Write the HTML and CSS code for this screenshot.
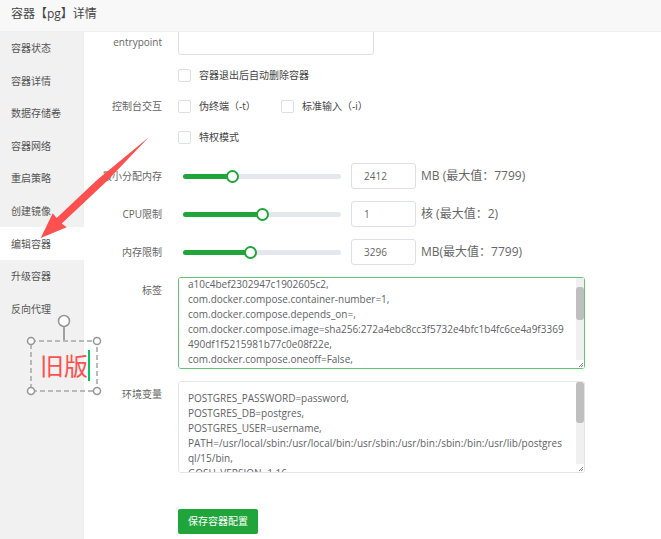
FILE: index.html
```
<!DOCTYPE html>
<html lang="zh-CN">
<head>
<meta charset="utf-8">
<title>容器【pg】详情</title>
<link rel="stylesheet" href="styles.css">
</head>
<body>
<header class="title-bar"><h1>容器【pg】详情</h1></header>
<div class="layout">
  <nav class="sidebar">
    <ul class="menu">
      <li><a href="#">容器状态</a></li>
      <li><a href="#">容器详情</a></li>
      <li><a href="#">数据存储卷</a></li>
      <li><a href="#">容器网络</a></li>
      <li><a href="#">重启策略</a></li>
      <li><a href="#">创建镜像</a></li>
      <li><a href="#" class="active">编辑容器</a></li>
      <li><a href="#">升级容器</a></li>
      <li><a href="#">反向代理</a></li>
    </ul>
  </nav>
  <main class="content">
    <form class="form">
      <div class="row">
        <label class="label" for="entry">entrypoint</label>
        <input class="text entry" id="entry" type="text">
      </div>
      <div class="checks">
        <div class="row">
          <span class="label"></span>
          <label class="check"><input type="checkbox">容器退出后自动删除容器</label>
        </div>
        <div class="row">
          <span class="label">控制台交互</span>
          <label class="check half"><input type="checkbox">伪终端（-t）</label>
          <label class="check"><input type="checkbox">标准输入（-i）</label>
        </div>
        <div class="row">
          <span class="label"></span>
          <label class="check"><input type="checkbox">特权模式</label>
        </div>
      </div>
      <div class="limits">
        <div class="row">
          <label class="label" for="min">最小分配内存</label>
          <input class="slider" id="min" type="range" max="7799" value="2300" style="--fill:31%">
          <input class="text num" type="text" value="2412" aria-label="最小分配内存">
          <span class="unit">MB (最大值：7799)</span>
        </div>
        <div class="row">
          <label class="label" for="cpu">CPU限制</label>
          <input class="slider" id="cpu" type="range" max="2" value="1" style="--fill:50%">
          <input class="text num" type="text" value="1" aria-label="CPU限制">
          <span class="unit">核 (最大值：2)</span>
        </div>
        <div class="row">
          <label class="label" for="mem">内存限制</label>
          <input class="slider" id="mem" type="range" max="7799" value="3296" style="--fill:42%">
          <input class="text num" type="text" value="3296" aria-label="内存限制">
          <span class="unit">MB(最大值：7799)</span>
        </div>
      </div>
      <div class="areas">
        <div class="row top">
          <label class="label" for="tags">标签</label>
          <div class="area-box">
            <textarea class="area focused" id="tags" spellcheck="false">

a10c4bef2302947c1902605c2,
com.docker.compose.container-number=1,
com.docker.compose.depends_on=,
com.docker.compose.image=sha256:272a4ebc8cc3f5732e4bfc1b4fc6ce4a9f3369490df1f5215981b77c0e08f22e,
com.docker.compose.oneoff=False,






</textarea>
            <div class="bar"><div class="thumb scrolled"></div><svg class="grip" width="8" height="8" viewBox="0 0 8 8" aria-hidden="true"><path d="M3 7L7 3M5 7L7 5" stroke="#888"/></svg></div>
          </div>
        </div>
        <div class="row top">
          <label class="label" for="env">环境变量</label>
          <div class="area-box">
            <textarea class="area" id="env" spellcheck="false">POSTGRES_PASSWORD=password,
POSTGRES_DB=postgres,
POSTGRES_USER=username,
PATH=/usr/local/sbin:/usr/local/bin:/usr/sbin:/usr/bin:/sbin:/bin:/usr/lib/postgresql/15/bin,
GOSU_VERSION=1.16



</textarea>
            <div class="bar"><div class="thumb"></div><svg class="grip" width="8" height="8" viewBox="0 0 8 8" aria-hidden="true"><path d="M3 7L7 3M5 7L7 5" stroke="#888"/></svg></div>
          </div>
        </div>
      </div>
      <div class="row actions">
        <span class="label"></span>
        <button class="save" type="button">保存容器配置</button>
      </div>
    </form>
  </main>
</div>
<svg class="arrow" width="112" height="106" viewBox="0 0 112 106" aria-hidden="true">
  <path d="M111 4 L59 47 L18.700 85 L14.700 80.300 L2.700 105 L28.700 94.300 L23.700 90.500 L69 48 Z" fill="#ff5050"/>
</svg>
<div class="note">
  <svg class="note-frame" width="80" height="84" viewBox="0 0 80 84" aria-hidden="true">
    <g fill="none" stroke="#b9b9b9" stroke-width="2">
      <path d="M40 11V27" stroke="#a0a0a0"/>
      <rect x="7" y="27" width="66" height="50" stroke-dasharray="5 3"/>
    </g>
    <g fill="#fff" stroke="#969696" stroke-width="1.500">
      <circle cx="40" cy="7" r="5.500"/>
      <circle cx="7" cy="27" r="3.500"/><circle cx="73" cy="27" r="3.500"/>
      <circle cx="7" cy="77" r="3.500"/><circle cx="73" cy="77" r="3.500"/>
    </g>
  </svg>
  <span class="note-text">旧版</span>
</div>
<script src="main.js"></script>
</body>
</html>
```
FILE: styles.css
```
* { box-sizing: border-box; }
body {
  margin: 0;
  height: 100vh;
  display: flex;
  flex-direction: column;
  overflow: hidden;
  background: #fff;
  color: #555;
  font: 10px/16px "Open Sans", "Noto Sans CJK SC", sans-serif;
}
input, textarea, button { font: inherit; color: inherit; margin: 0; }
.title-bar {
  flex: none;
  padding: 4px 11px 7px;
  background: #f8f8f8;
  border-bottom: 1px solid #eee;
}
h1 { margin: 0; font-size: 12px; line-height: 20px; font-weight: 400; color: #444; }
.layout { flex: 1; min-height: 0; display: flex; }
.sidebar { flex: none; width: 84px; background: #f1f1f1; }
.menu {
  height: 293px;
  margin: 0;
  padding: 0;
  list-style: none;
  display: grid;
  grid-template-rows: repeat(9, 1fr);
}
.menu a {
  display: flex;
  align-items: center;
  height: 100%;
  padding-left: 11px;
  color: #555;
  text-decoration: none;
}
.menu .active { background: #fff; }
.content { flex: 1; min-width: 0; overflow: hidden; }
.form { margin-top: -3px; }
.row { display: flex; align-items: center; min-height: 26px; }
.row.top { align-items: flex-start; }
.label {
  flex: none;
  width: 78px;
  margin-right: 16px;
  text-align: right;
  white-space: nowrap;
  color: #666;
}
.top .label { line-height: 26px; }
.text {
  height: 26px;
  border: 1px solid #dcdfe6;
  border-radius: 3px;
  padding: 0 12px;
  background: #fff;
  color: #666;
  outline: 0;
}
.entry { width: 196px; }
.checks { padding: 7px 0 13px; display: grid; gap: 5px; }
.check { display: flex; align-items: center; gap: 8px; color: #444; }
.half { width: 103px; }
.check input {
  appearance: none;
  width: 13px;
  height: 13px;
  border: 1px solid #dcdfe6;
  border-radius: 2px;
  background: #fff;
}
.limits { display: grid; gap: 12px; padding-bottom: 12px; }
.slider {
  appearance: none;
  flex: none;
  width: 158px;
  height: 14px;
  margin: 0 10px 0 5px;
  background: none;
}
.slider::-webkit-slider-runnable-track {
  height: 5px;
  border-radius: 3px;
  background: linear-gradient(to right, #20a53a var(--fill), #e4e7ed var(--fill));
}
.slider::-webkit-slider-thumb {
  appearance: none;
  width: 13px;
  height: 13px;
  margin-top: -4px;
  border: 2px solid #20a53a;
  border-radius: 50%;
  background: #fff;
}
.num { width: 65px; margin-right: 5px; }
.unit { font-size: 12px; color: #666; white-space: nowrap; }
.areas { display: grid; gap: 12px; }
.area-box { position: relative; width: 407px; }
.area {
  display: block;
  width: 100%;
  height: 92px;
  padding: 9px 17px 9px 9px;
  border: 1px solid #e2e4ea;
  border-radius: 3px;
  background: #fff;
  line-height: 15px;
  word-break: break-all;
  color: #606266;
  overflow-y: auto;
  scrollbar-width: none;
  resize: none;
  outline: 0;
}
.focused { border-color: #62c375; }
.bar {
  position: absolute;
  top: 1px;
  right: 1px;
  bottom: 1px;
  width: 8px;
  display: flex;
  flex-direction: column;
  background: #f0f0f0;
}
.thumb { height: 41px; border-radius: 3px; background: #bfbfbf; }
.scrolled { height: 33px; margin-top: 9px; }
.grip { margin-top: auto; background: #fff; }
.actions { margin-top: 35px; }
.save {
  height: 25px;
  padding: 0 10px;
  border: 0;
  border-radius: 2px;
  background: #20a53a;
  color: #fff;
}
.arrow { position: absolute; left: 38px; top: 133px; }
.note { position: absolute; left: 24px; top: 314px; width: 80px; height: 84px; }
.note-frame { display: block; }
.note-text {
  position: absolute;
  left: 16px;
  top: 36px;
  border-right: 2px solid #07c160;
  font-size: 24px;
  line-height: 31px;
  color: #ff5050;
}
```
FILE: main.js
```
document.getElementById("tags").scrollTop = 25;
```
